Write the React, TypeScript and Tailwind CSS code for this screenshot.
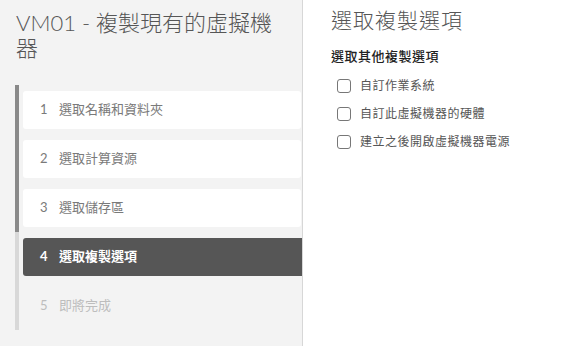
import React from "react";

const font = '"Lato", "Noto Sans CJK TC", sans-serif';

const steps = [
  { n: 1, label: "選取名稱和資料夾", state: "done" },
  { n: 2, label: "選取計算資源", state: "done" },
  { n: 3, label: "選取儲存區", state: "done" },
  { n: 4, label: "選取複製選項", state: "active" },
  { n: 5, label: "即將完成", state: "todo" },
];

const options = ["自訂作業系統", "自訂此虛擬機器的硬體", "建立之後開啟虛擬機器電源"];

export default function App() {
  return (
    <div className="w-[580px] h-[346px] flex bg-white overflow-hidden" style={{ fontFamily: font }}>
      <div className="w-[303px] h-full bg-[#f3f3f3] border-r border-[#d7d7d7] flex flex-col">
        <h1 className="pl-[16px] pr-[16px] pt-[10px] text-[22px] leading-[25px] text-[#565656] font-light">
          VM01 - 複製現有的虛擬機器
        </h1>
        <ul className="mt-[25px] ml-[15px]">
          {steps.map((s) => (
            <li
              key={s.n}
              className={
                "border-l-4 pt-[6px] pb-[5px] " +
                (s.state === "done" ? "border-[#898989]" : "border-[#d8d8d8]")
              }
            >
              {s.state === "done" && (
                <div className="ml-[4px] mr-[1px] h-[38px] rounded-[3px] bg-white flex items-center pl-[17px] text-[13px] text-[#7a7a7a]">
                  <span className="w-[19px]">{s.n}</span>
                  <span>{s.label}</span>
                </div>
              )}
              {s.state === "active" && (
                <div className="ml-[4px] h-[38px] rounded-l-[3px] bg-[#565656] flex items-center pl-[17px] text-[13px] text-white font-bold">
                  <span className="w-[19px]">{s.n}</span>
                  <span>{s.label}</span>
                </div>
              )}
              {s.state === "todo" && (
                <div className="ml-[4px] h-[38px] flex items-center pl-[17px] text-[13px] text-[#bdbdbd]">
                  <span className="w-[19px]">{s.n}</span>
                  <span>{s.label}</span>
                </div>
              )}
            </li>
          ))}
        </ul>
      </div>
      <div className="flex-1 pl-[28px] pt-[6px]">
        <h2 className="text-[21px] leading-[28px] text-[#565656] font-light tracking-[1px]">選取複製選項</h2>
        <div className="mt-[13px] text-[13px] leading-[18px] font-medium text-[#222] tracking-[0.5px]">選取其他複製選項</div>
        <div className="mt-[14px] flex flex-col gap-[14px]">
          {options.map((o) => (
            <label key={o} className="flex items-center h-[14px]">
              <span className="ml-[6px] w-[14px] h-[14px] rounded-[3px] border border-[#777] bg-white" />
              <span className="ml-[9px] text-[12px] text-[#565656] tracking-[0.5px]">{o}</span>
            </label>
          ))}
        </div>
      </div>
    </div>
  );
}
